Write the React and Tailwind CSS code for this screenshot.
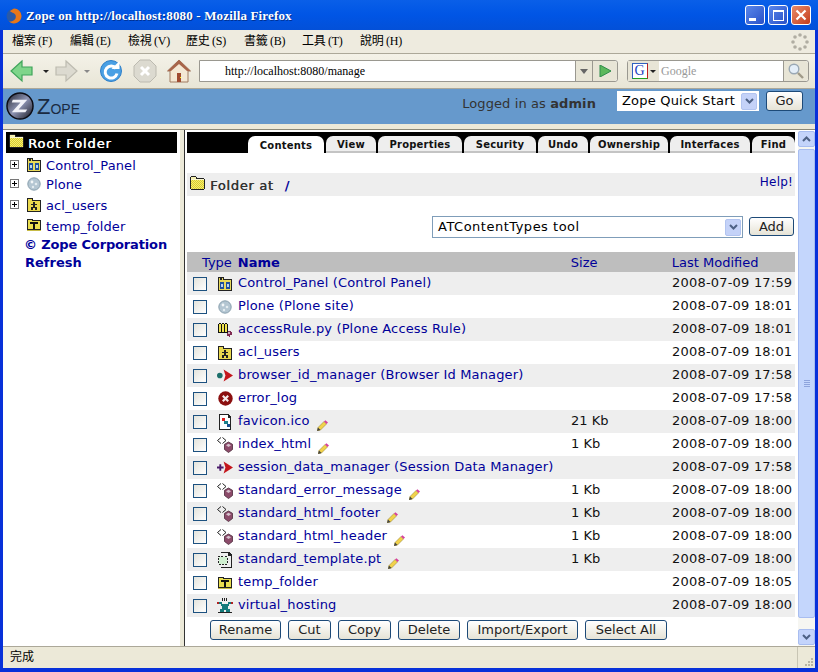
import React from 'react';

const PAGE_FONT = "font-['DejaVu_Sans',sans-serif]";
const LINK = 'text-[#000099]';

// small drawings for the Zope meta type icons
const Folder = ({ className = '' }) => (
  <svg width="17" height="16" viewBox="0 0 17 16" className={className} shapeRendering="crispEdges">
    <defs>
      <pattern id="dither" width="2" height="2" patternUnits="userSpaceOnUse">
        <rect width="2" height="2" fill="#f6ee70" />
        <rect width="1" height="1" fill="#d8cc30" />
        <rect x="1" y="1" width="1" height="1" fill="#d8cc30" />
      </pattern>
    </defs>
    <path d="M1 2h1V1h5v1h1v1h7v1h1v10h-1v1H2v-1H1z" fill="#222" />
    <path d="M2 4h13v10H2z" fill="url(#dither)" />
    <path d="M2 2h5v2H2z" fill="#f6f1b0" />
    <path d="M2 4h13v1H2z" fill="#fbf8d0" />
  </svg>
);

const ControlPanelIcon = () => (
  <svg width="16" height="16" viewBox="0 0 16 16" shapeRendering="crispEdges">
    <path d="M1 1h6v2h8v12H1z" fill="#222" />
    <path d="M2 2h4v2h8v10H2z" fill="#e8d95a" />
    <path d="M3 6h4v7H3zM9 6h4v7H9z" fill="#1d4f9c" />
    <path d="M4 8h2v3H4zM10 8h2v3h-2z" fill="#b8d4f0" />
    <path d="M3 2h2v2H3z" fill="#222" />
  </svg>
);

const PloneIcon = () => (
  <svg width="14" height="14" viewBox="0 0 14 14">
    <circle cx="7" cy="7" r="6.2" fill="#b4c6d2" stroke="#8aa0ae" />
    <circle cx="5" cy="5" r="1.4" fill="#f2f6f8" />
    <circle cx="9" cy="7" r="1.3" fill="#e4ecf0" />
    <circle cx="6" cy="10" r="1.2" fill="#e4ecf0" />
  </svg>
);

const AccessRuleIcon = () => (
  <svg width="16" height="16" viewBox="0 0 16 16" shapeRendering="crispEdges">
    <path d="M1 2h1V1h2v1h1V1h2v1h1V1h2v1h1v9H1z" fill="#111" />
    <path d="M2 2h2v8H2zM5 2h2v8H5zM8 2h2v8H8z" fill="#f0e34f" />
    <path d="M11 9h3v1h1v3h-2v2h-1v-1h-2v-3h1z" fill="#7f2a52" />
    <path d="M11 10h2v2h-2z" fill="#c8b0c0" />
  </svg>
);

const AclIcon = () => (
  <svg width="16" height="16" viewBox="0 0 16 16" shapeRendering="crispEdges">
    <path d="M1 1h6v2h8v12H1z" fill="#222" />
    <path d="M2 2h4v2h8v10H2z" fill="#ead94e" />
    <path d="M7 5h2v2h2v1H9v2h2v3H9v-2H7v2H5v-3h2V8H5V7h2z" fill="#222" />
  </svg>
);

const BrowserIdIcon = () => (
  <svg width="17" height="13" viewBox="0 0 17 13">
    <circle cx="3" cy="6.500" r="3" fill="#1c6f6a" />
    <path d="M7 0l10 6.500L7 13l2-6.500z" fill="#c4161c" />
  </svg>
);

const ErrorIcon = () => (
  <svg width="15" height="15" viewBox="0 0 15 15">
    <circle cx="7.5" cy="7.5" r="7.2" fill="#8b0f0f" />
    <path d="M4.8 4.8l5.4 5.4M10.2 4.8l-5.4 5.4" stroke="#f4eaea" strokeWidth="2.2" />
  </svg>
);

const FaviconIcon = () => (
  <svg width="14" height="16" viewBox="0 0 14 16" shapeRendering="crispEdges">
    <path d="M1 0h9l3 3v13H1z" fill="#222" />
    <path d="M2 1h8v3h2v11H2z" fill="#fff" />
    <path d="M4 4h3v3H4z" fill="#e02020" />
    <path d="M6 7h4v3H6z" fill="#1c7f8a" />
    <path d="M9 10h3v3H9z" fill="#1a4f90" />
  </svg>
);

const DtmlIcon = () => (
  <svg width="16" height="16" viewBox="0 0 16 16">
    <path d="M4 0.500L0.500 3.500 4 6.500M5.500 0.500L9 3.500 5.500 6.500" fill="none" stroke="#222" />
    <path d="M11.500 5l4 2.300v5.200l-4 3-4-3V7.300z" fill="#8c4b6a" stroke="#4a2a3a" strokeWidth="0.8" />
    <path d="M9 8.200L11.500 6.800 14 8.200 11.500 10z" fill="#d6c2ce" />
  </svg>
);

const SessionIcon = () => (
  <svg width="17" height="13" viewBox="0 0 17 13">
    <path d="M0 5.500h2.500V3h2v2.500H7v2H4.500V10h-2V7.500H0z" fill="#4a1a6a" />
    <path d="M7 0l10 6.500L7 13l2-6.500z" fill="#c4161c" />
  </svg>
);

const TemplateIcon = () => (
  <svg width="16" height="16" viewBox="0 0 16 16" shapeRendering="crispEdges">
    <path d="M4 0h8l3 3v13H4v-1h10V4h-3V1H4z" fill="#222" />
    <path d="M2 5h8v7H2z" fill="#d0f0d0" />
    <path d="M1 4h2v1H1zM4 4h2v1H4zM8 4h2v1H8zM1 6h1v2H1zM1 9h1v2H1zM10 6h1v2h-1zM10 9h1v2h-1zM2 12h2v1H2zM5 12h2v1H5zM8 12h2v1H8z" fill="#222" />
  </svg>
);

const TempFolderIcon = () => (
  <svg width="16" height="14" viewBox="0 0 16 14" shapeRendering="crispEdges">
    <path d="M1 1h6v1h8v10H1z" fill="#222" />
    <path d="M2 2h4v1h8v8H2z" fill="#eadf50" />
    <path d="M4 4h8v2H9v5H7V6H4z" fill="#111" />
    <path d="M1 12h14v1H1z" fill="#c8bc48" />
  </svg>
);

const VirtualHostIcon = () => (
  <svg width="16" height="16" viewBox="0 0 16 16" shapeRendering="crispEdges">
    <path d="M5 0h1v3H5zM7 0h1v3H7zM9 0h1v3H9z" fill="#222" />
    <path d="M2 4h3v2h6V4h3v2h-2v2h-1v3h2v3H9v-2H7v2H3v-3h2V8H4V6H2z" fill="#137a7a" />
    <path d="M0 4h2v2H0zM14 4h2v2h-2z" fill="#b02020" />
    <path d="M1 14h14v1H1z" fill="#222" />
  </svg>
);

const Pencil = ({ className = '' }) => (
  <svg width="11" height="11" viewBox="0 0 11 11" className={className}>
    <path d="M0 11l1-3.5L7 1.5 9.5 4l-6 6z" fill="#f2d24a" stroke="#8a7a30" strokeWidth="0.5" />
    <path d="M7 1.5L8.4 0.2 11 2.6 9.5 4z" fill="#d6409c" />
    <path d="M0 11l1-3.5L3.5 10z" fill="#444" />
  </svg>
);

const PlusBox = () => (
  <svg width="9" height="9" viewBox="0 0 9 9" shapeRendering="crispEdges">
    <path d="M0.5 0.5h8v8h-8z" fill="#fff" stroke="#777" />
    <path d="M2 4h5v1H2zM4 2h1v5H4z" fill="#000" />
  </svg>
);

const rows = [
  { icon: <ControlPanelIcon />, name: 'Control_Panel (Control Panel)', date: '2008-07-09 17:59' },
  { icon: <PloneIcon />, name: 'Plone (Plone site)', date: '2008-07-09 18:01' },
  { icon: <AccessRuleIcon />, name: 'accessRule.py (Plone Access Rule)', date: '2008-07-09 18:01' },
  { icon: <AclIcon />, name: 'acl_users', date: '2008-07-09 18:01' },
  { icon: <BrowserIdIcon />, name: 'browser_id_manager (Browser Id Manager)', date: '2008-07-09 17:58' },
  { icon: <ErrorIcon />, name: 'error_log', date: '2008-07-09 17:58' },
  { icon: <FaviconIcon />, name: 'favicon.ico', size: '21 Kb', pencil: true, date: '2008-07-09 18:00' },
  { icon: <DtmlIcon />, name: 'index_html', size: '1 Kb', pencil: true, date: '2008-07-09 18:00' },
  { icon: <SessionIcon />, name: 'session_data_manager (Session Data Manager)', date: '2008-07-09 17:58' },
  { icon: <DtmlIcon />, name: 'standard_error_message', size: '1 Kb', pencil: true, date: '2008-07-09 18:00' },
  { icon: <DtmlIcon />, name: 'standard_html_footer', size: '1 Kb', pencil: true, date: '2008-07-09 18:00' },
  { icon: <DtmlIcon />, name: 'standard_html_header', size: '1 Kb', pencil: true, date: '2008-07-09 18:00' },
  { icon: <TemplateIcon />, name: 'standard_template.pt', size: '1 Kb', pencil: true, date: '2008-07-09 18:00' },
  { icon: <TempFolderIcon />, name: 'temp_folder', date: '2008-07-09 18:05' },
  { icon: <VirtualHostIcon />, name: 'virtual_hosting', date: '2008-07-09 18:00' },
];

const tabs = [
  { label: 'Contents', w: 'w-[76px]', active: true },
  { label: 'View', w: 'w-[50px]' },
  { label: 'Properties', w: 'w-[84px]' },
  { label: 'Security', w: 'w-[72px]' },
  { label: 'Undo', w: 'w-[50px]' },
  { label: 'Ownership', w: 'w-[78px]' },
  { label: 'Interfaces', w: 'w-[80px]' },
  { label: 'Find', w: 'w-[43px]' },
];

const menus = ['檔案 (F)', '編輯 (E)', '檢視 (V)', '歷史 (S)', '書籤 (B)', '工具 (T)', '說明 (H)'];
const actions = [
  { label: 'Rename', w: 'w-[71px]' },
  { label: 'Cut', w: 'w-[43px]' },
  { label: 'Copy', w: 'w-[53px]' },
  { label: 'Delete', w: 'w-[62px]' },
  { label: 'Import/Export', w: 'w-[111px]' },
  { label: 'Select All', w: 'w-[82px]' },
];

const XpButton = ({ children, className = '' }) => (
  <div className={`flex items-center justify-center rounded-[3px] border border-[#1d4a78] bg-gradient-to-b from-white to-[#e6e3d6] text-[13px] text-[#222] ${className}`}>
    {children}
  </div>
);

const XpArrow = () => (
  <div className="flex h-[17px] w-[16px] items-center justify-center rounded-[2px] bg-[#c4d2f8] border border-[#b2c4f0]">
    <svg width="9" height="6" viewBox="0 0 9 6"><path d="M1 1l3.5 3.5L8 1" fill="none" stroke="#4d6185" strokeWidth="2" /></svg>
  </div>
);

const TableRow = ({ row, shaded }) => (
  <div className={`flex h-[23px] items-center ${shaded ? 'bg-[#eeeeee]' : 'bg-white'}`}>
    <div className="ml-[6px] h-[14px] w-[14px] border border-[#1c5180] bg-gradient-to-br from-[#e4e4dc] to-white" />
    <div className="ml-[10px] mr-[5px] flex w-[16px] justify-center">{row.icon}</div>
    <div className="flex w-[333px] items-center">
      <span className={`-mt-[1px] text-[13px] tracking-[0.15px] whitespace-nowrap ${LINK}`}>{row.name}</span>
      {row.pencil && <Pencil className="ml-[7px] mt-[7px]" />}
    </div>
    <div className="-mt-[1px] w-[101px] text-[13px] text-[#111]">{row.size}</div>
    <div className="-mt-[1px] text-[13px] tracking-[0.2px] whitespace-nowrap text-[#111]">{row.date}</div>
  </div>
);

const Chrome = () => (
  <>
    <div className="h-[23px] flex items-center bg-[#eeebdf]">
      {menus.map((m) => (
        <span key={m} className="w-[58px] first:ml-[9px] -mt-[1px] text-[12px] tracking-[-0.3px] whitespace-nowrap text-black font-['Liberation_Serif','Noto_Sans_CJK_TC',serif]">{m}</span>
      ))}
      <svg width="18" height="18" viewBox="0 0 18 18" className="ml-auto mr-[6px]">
        {[[9, 2], [14, 4], [16, 9], [14, 14], [9, 16], [4, 14], [2, 9], [4, 4]].map(([x, y]) => (
          <circle key={`${x}-${y}`} cx={x} cy={y} r="1.8" fill="#b0ada2" />
        ))}
      </svg>
    </div>
    <div className="flex h-[36px] items-center border-t border-b border-t-[#aca899] border-b-[#aca899] bg-gradient-to-b from-[#f4f2e8] to-[#e8e5d6]">
      <svg width="24" height="24" viewBox="0 0 24 24" className="ml-[7px]">
        <path d="M12 2L1 12l11 10v-6h10V8H12z" fill="#7fd58a" stroke="#3fa45a" strokeWidth="1.2" />
      </svg>
      <span className="ml-[9px] h-0 w-0 border-x-[3px] border-t-[3px] border-x-transparent border-t-[#222]" />
      <svg width="24" height="24" viewBox="0 0 24 24" className="ml-[5px]">
        <path d="M12 2l11 10-11 10v-6H2V8h10z" fill="#dcdad0" stroke="#bdbbb0" strokeWidth="1.2" />
      </svg>
      <span className="ml-[6px] h-0 w-0 border-x-[3px] border-t-[3px] border-x-transparent border-t-[#888]" />
      <svg width="24" height="24" viewBox="0 0 24 24" className="ml-[9px]">
        <circle cx="12" cy="12" r="10.5" fill="#4aa0e4" stroke="#2f7fc8" />
        <path d="M17 9.500A6 6 0 1 0 18 14.500" fill="none" stroke="#fff" strokeWidth="3" />
        <path d="M12.500 10h8V2z" fill="#fff" />
      </svg>
      <svg width="24" height="24" viewBox="0 0 24 24" className="ml-[10px]">
        <path d="M7 1h10l6 6v10l-6 6H7l-6-6V7z" fill="#dcdad0" stroke="#bcbab0" />
        <path d="M8 8l8 8M16 8l-8 8" stroke="#fff" strokeWidth="3" />
      </svg>
      <svg width="24" height="24" viewBox="0 0 24 24" className="ml-[10px]">
        <path d="M12 1L0.5 12H3v11h18V12h2.5z" fill="#f4e8d4" stroke="#a07a60" />
        <path d="M12 1L0.5 12H4L12 5l8 7h3.5z" fill="#a8654a" />
        <path d="M10 14h4v9h-4z" fill="#a04a30" />
        <path d="M13 18h1v1h-1z" fill="#ff0" />
      </svg>
      <div className="ml-[8px] flex h-[22px] w-[419px] items-center rounded-r-[3px] border border-[#9a9890] bg-white">
        <span className="ml-[25px] flex-1 text-[12px] text-black font-['Liberation_Serif',serif]">http://localhost:8080/manage</span>
        <div className="flex h-full w-[17px] items-center justify-center border-l border-[#9a9890] bg-[#e8e5d6]">
          <span className="h-0 w-0 border-x-[4px] border-t-[5px] border-x-transparent border-t-[#666]" />
        </div>
        <div className="flex h-full w-[25px] items-center justify-center rounded-r-[3px] border-l border-[#9a9890] bg-[#e8e5d6]">
          <svg width="12" height="12" viewBox="0 0 12 12"><path d="M1 0l11 6-11 6z" fill="#5cb85c" stroke="#2e8b4a" /></svg>
        </div>
      </div>
      <div className="ml-[9px] flex h-[22px] w-[182px] items-center rounded-[3px] border border-[#9a9890] bg-white">
        <div className="flex h-full w-[31px] items-center justify-center gap-[2px] bg-[#e8e5d6]">
          <span className="flex h-[16px] w-[16px] items-center justify-center border border-t-[#3060c0] border-l-[#3060c0] border-r-[#c02020] border-b-[#20a020] bg-white text-[14px] leading-none text-[#2040c0] font-['Liberation_Serif',serif]">G</span>
          <span className="h-0 w-0 border-x-[3px] border-t-[3px] border-x-transparent border-t-[#222]" />
        </div>
        <span className="ml-[2px] flex-1 text-[12px] text-[#999] font-['Liberation_Serif',serif]">Google</span>
        <div className="flex h-full w-[25px] items-center justify-center rounded-r-[3px] border-l border-[#9a9890] bg-[#e8e5d6]">
          <svg width="18" height="18" viewBox="0 0 18 18">
            <circle cx="7" cy="7" r="4.8" fill="#e4eef8" stroke="#9aa8b4" strokeWidth="1.4" />
            <path d="M11 11l5 5" stroke="#a09a88" strokeWidth="2.4" />
          </svg>
        </div>
      </div>
    </div>
  </>
);

const ZopeHeader = () => (
  <div className={`flex h-[35px] items-start bg-[#6699cc] ${PAGE_FONT}`}>
    <svg width="28" height="28" viewBox="0 0 29 29" className="ml-[3px] mt-[3px]">
      <defs>
        <linearGradient id="zg" x1="0" y1="0" x2="1" y2="1">
          <stop offset="0" stopColor="#20222c" />
          <stop offset="0.5" stopColor="#8e94b4" />
          <stop offset="1" stopColor="#14141c" />
        </linearGradient>
      </defs>
      <circle cx="14.5" cy="14.5" r="13.5" fill="url(#zg)" stroke="#0c0c14" strokeWidth="1.5" />
      <path d="M7 8h15l-9 10h9l-2 3H6l9-10H6z" fill="#f2f2f8" />
    </svg>
    <span className="ml-[3px] mt-[5px] text-[22px] leading-[26px] text-[#1a2a40] font-['Liberation_Sans',sans-serif]">Z<span className="text-[14px]">OPE</span></span>
    <span className="ml-auto mt-[5px] text-[13px] leading-[20px] tracking-[0.1px] text-[#333]">Logged in as <b>admin</b></span>
    <div className="ml-[21px] mt-[2px] flex h-[20px] w-[142px] items-center justify-between bg-white pl-[5px] pr-[2px] text-[13px] tracking-[0.2px] text-black">
      <span>Zope Quick Start</span>
      <XpArrow />
    </div>
    <XpButton className="ml-[7px] mr-[12px] mt-[2px] h-[20px] w-[37px]">Go</XpButton>
  </div>
);

const LeftFrame = () => (
  <div className={`w-[177px] shrink-0 bg-white pl-[3px] pt-[2px] ${PAGE_FONT}`}>
    <div className="flex h-[21px] w-[171px] items-center bg-black">
      <Folder className="ml-[2px] -mt-[3px]" />
      <span className="ml-[3px] mt-[2px] text-[13px] font-normal tracking-[0.9px] text-white [text-shadow:0.4px_0_0_#fff]">Root Folder</span>
    </div>
    {[
      { icon: <ControlPanelIcon />, name: 'Control_Panel', h: 'h-[19px]' },
      { icon: <PloneIcon />, name: 'Plone', h: 'h-[19px]' },
      { icon: <AclIcon />, name: 'acl_users', h: 'h-[21px]' },
    ].map((t, i) => (
      <div key={t.name} className={`flex items-center ${t.h} ${i === 0 ? 'mt-[3px]' : ''} ${i === 2 ? 'mt-[1px]' : ''}`}>
        <span className="ml-[4px] -mt-[3px] flex"><PlusBox /></span>
        <span className="ml-[6px] -mt-[2px] flex w-[18px] justify-center">{t.icon}</span>
        <span className={`ml-[3px] text-[13px] tracking-[0.1px] ${LINK}`}>{t.name}</span>
      </div>
    ))}
    <div className="flex h-[21px] items-center pl-[20px]">
      <span className="-mt-[3px] flex w-[17px]"><TempFolderIcon /></span>
      <span className={`ml-[3px] text-[13px] tracking-[0.1px] ${LINK}`}>temp_folder</span>
    </div>
    <div className={`mt-[-2px] h-[19px] pl-[18px] text-[13px] tracking-[-0.15px] leading-[19px] font-bold whitespace-nowrap ${LINK}`}>© Zope Corporation</div>
    <div className={`h-[18px] pl-[19px] text-[13px] leading-[18px] font-bold ${LINK}`}>Refresh</div>
  </div>
);

const Scrollbar = () => (
  <div className="flex h-full w-[17px] shrink-0 flex-col bg-[#f6f6f2]">
    <div className="flex h-[16px] items-center justify-center rounded-[2px] border border-[#a8bdf0] bg-[#c4d4fb]">
      <svg width="9" height="6" viewBox="0 0 9 6"><path d="M1 5l3.5-3.5L8 5" fill="none" stroke="#4d6185" strokeWidth="2" /></svg>
    </div>
    <div className="mt-[2px] flex h-[469px] flex-col items-center justify-center gap-[1px] rounded-[2px] border border-[#a8bdf0] bg-[#c4d6fc]">
      <span className="h-px w-[6px] bg-[#8ea4dc]" />
      <span className="h-px w-[6px] bg-[#8ea4dc]" />
      <span className="h-px w-[6px] bg-[#8ea4dc]" />
      <span className="h-px w-[6px] bg-[#8ea4dc]" />
    </div>
    <div className="mt-auto mb-[1px] flex h-[16px] items-center justify-center rounded-[2px] border border-[#a8bdf0] bg-[#c4d4fb]">
      <svg width="9" height="6" viewBox="0 0 9 6"><path d="M1 1l3.5 3.5L8 1" fill="none" stroke="#4d6185" strokeWidth="2" /></svg>
    </div>
  </div>
);

const MainFrame = () => (
  <div className={`flex min-w-0 flex-1 bg-white pt-[1px] ${PAGE_FONT}`}>
    <div className="w-[608px] shrink-0 ml-[2px] pt-[1px]">
      <div className="flex h-[21px] items-end gap-[2px] bg-black pl-[61px]">
        {tabs.map((t) => (
          <div
            key={t.label}
            className={`flex h-[17px] items-center justify-center rounded-t-[7px] pt-[2px] text-[10px] font-bold tracking-[0.2px] text-[#111] ${t.w} ${t.active ? 'bg-white' : 'border-b-2 border-[#c4c4c4] bg-[#eeeeee]'}`}
          >
            {t.label}
          </div>
        ))}
      </div>
      <div className="mt-[20px] flex h-[23px] items-center justify-between bg-[#eeeeee]">
        <div className="flex items-center">
          <Folder className="ml-[2px] -mt-[4px]" />
          <span className="ml-[4px] mt-[3px] text-[13px] tracking-[0.7px] text-[#333] [text-shadow:0.4px_0_0_#333]">Folder at</span>
          <span className={`ml-[11px] mt-[3px] text-[13px] font-bold ${LINK}`}>/</span>
        </div>
        <span className={`mr-[2px] -mt-[6px] text-[12px] tracking-[0.2px] ${LINK}`}>Help!</span>
      </div>
      <div className="mt-[20px] flex h-[22px] items-start justify-end">
        <div className="flex h-[22px] w-[311px] items-center justify-between border border-[#7f9db9] bg-white pl-[5px] pr-[1px] text-[13px] tracking-[0.5px] text-black">
          <span>ATContentTypes tool</span>
          <XpArrow />
        </div>
        <XpButton className="ml-[6px] mr-[1px] mt-[1px] h-[19px] w-[45px]">Add</XpButton>
      </div>
      <div className={`mt-[14px] flex h-[20px] items-center bg-[#bebebe] pt-[1px] text-[13px] ${LINK}`}>
        <span className="ml-[15px]">Type</span>
        <span className="ml-[6px] w-[333px] font-bold">Name</span>
        <span className="w-[101px]">Size</span>
        <span>Last Modified</span>
      </div>
      {rows.map((row, i) => (
        <TableRow key={row.name} row={row} shaded={i % 2 === 0} />
      ))}
      <div className="mt-[3px] flex gap-[7px] pl-[23px]">
        {actions.map((a) => (
          <XpButton key={a.label} className={`h-[20px] ${a.w}`}>{a.label}</XpButton>
        ))}
      </div>
    </div>
    <div className="ml-[3px]"><Scrollbar /></div>
  </div>
);

export default function App() {
  return (
    <div className="flex h-[672px] w-[818px] flex-col overflow-hidden bg-[#0831d9]">
      <div className="flex h-[30px] shrink-0 items-center bg-gradient-to-b from-[#0a5fe8] via-[#0055e5] to-[#0350d8]">
        <svg width="16" height="16" viewBox="0 0 16 16" className="ml-[6px] mt-[1px]">
          <circle cx="8" cy="8" r="7.5" fill="#2a5aa8" />
          <path d="M8 .5A7.5 7.5 0 0 1 15.5 8 7.5 7.5 0 0 1 3 13.5C7 14 11 11 9.500 7 8 4 5 5 4 3z" fill="#e8771a" />
        </svg>
        <span className="ml-[4px] pt-[1px] text-[13px] font-bold tracking-[0.15px] text-white [text-shadow:1px_1px_0_#003090] font-['Liberation_Serif',serif]">Zope on http://localhost:8080 - Mozilla Firefox</span>
        <div className="ml-auto mr-[7px] flex gap-[3px]">
          <div className="relative h-[20px] w-[20px] rounded-[3px] border border-white bg-gradient-to-br from-[#5a86ea] to-[#2a50c8]">
            <span className="absolute bottom-[3px] left-[3px] h-[3px] w-[7px] bg-white" />
          </div>
          <div className="flex h-[20px] w-[20px] items-center justify-center rounded-[3px] border border-white bg-gradient-to-br from-[#5a86ea] to-[#2a50c8]">
            <span className="h-[11px] w-[11px] border border-t-2 border-white" />
          </div>
          <div className="flex h-[20px] w-[20px] items-center justify-center rounded-[3px] border border-white bg-gradient-to-br from-[#e88a68] to-[#c43a18]">
            <svg width="12" height="12" viewBox="0 0 12 12"><path d="M1.500 1.500l9 9M10.500 1.500l-9 9" stroke="#fff" strokeWidth="2.200" /></svg>
          </div>
        </div>
      </div>
      <div className="mx-[3px] flex min-h-0 flex-1 flex-col">
        <Chrome />
        <ZopeHeader />
        <div className="h-[6px] shrink-0 border-b border-[#8a8878] bg-[#ece9d8]" />
        <div className="flex min-h-0 flex-1">
          <LeftFrame />
          <div className="w-[5px] shrink-0 border-r border-[#333] bg-[#ece9d8]" />
          <MainFrame />
        </div>
        <div className="flex h-[22px] shrink-0 items-center border-t border-[#aca899] bg-[#ece9d8]">
          <span className="ml-[7px] -mt-[3px] text-[12px] text-black font-['Noto_Sans_CJK_TC',sans-serif]">完成</span>
          <div className="ml-auto flex h-full w-[18px] items-end justify-end border-l border-[#c8c5b4] pb-[1px] pr-[1px]">
            <svg width="11" height="11" viewBox="0 0 11 11" shapeRendering="crispEdges">
              <path d="M8 2h2v2H8zM5 5h2v2H5zM8 5h2v2H8zM2 8h2v2H2zM5 8h2v2H5zM8 8h2v2H8z" fill="#b8b5a4" />
            </svg>
          </div>
        </div>
      </div>
      <div className="h-[4px] shrink-0 bg-[#0831d9]" />
    </div>
  );
}
